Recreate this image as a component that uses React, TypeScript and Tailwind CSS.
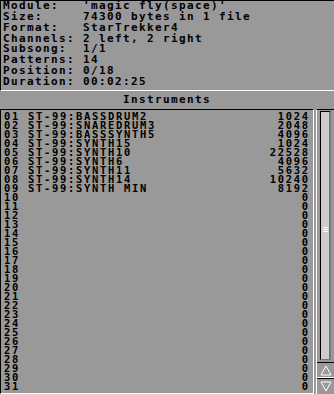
import React from "react";

const info: [string, string][] = [
  ["Module:", "'magic fly(space)'"],
  ["Size:", "74300 bytes in 1 file"],
  ["Format:", "StarTrekker4"],
  ["Channels:", "2 left, 2 right"],
  ["Subsong:", "1/1"],
  ["Patterns:", "14"],
  ["Position:", "0/18"],
  ["Duration:", "00:02:25"],
];

const named: [string, number][] = [
  ["ST-99:BASSDRUM2", 1024],
  ["ST-99:SNAREDRUM3", 2048],
  ["ST-99:BASSSYNTH5", 4096],
  ["ST-99:SYNTH15", 1024],
  ["ST-99:SYNTH10", 22528],
  ["ST-99:SYNTH6", 4096],
  ["ST-99:SYNTH11", 5632],
  ["ST-99:SYNTH14", 10240],
  ["ST-99:SYNTH MIN", 8192],
];

const instruments = Array.from({ length: 31 }, (_, i) => {
  const n = named[i];
  return {
    num: String(i + 1).padStart(2, "0"),
    name: n ? n[0] : "",
    size: n ? n[1] : 0,
  };
});

export default function App() {
  return (
    <div
      className="w-[334px] h-[394px] overflow-hidden bg-[#999999] text-black flex flex-col font-bold"
      style={{ fontFamily: '"DejaVu Sans Mono", "Liberation Mono", monospace' }}
    >
      {/* module info */}
      <div className="h-[91px] shrink-0 border-t border-l border-t-black border-l-black border-b border-b-white pl-[2px] text-[11px] leading-[10.85px] tracking-[1.38px]">
        {info.map(([k, v]) => (
          <div key={k} className="flex whitespace-pre">
            <span className="w-[80px] shrink-0">{k}</span>
            <span>{v}</span>
          </div>
        ))}
      </div>

      <div className="h-[18px] shrink-0 flex items-center justify-center text-[11px] tracking-[1.38px]">
        Instruments
      </div>

      <div className="flex flex-1 min-h-0 gap-[2px]">
        {/* list */}
        <div className="flex-1 border-t border-l border-t-black border-l-black border-r border-r-white border-b border-b-white pl-[3px] pr-[5px] pt-[2px] text-[10.5px] leading-[9px] tracking-[1.68px]">
          {instruments.map((it) => (
            <div key={it.num} className="flex h-[9px] whitespace-pre">
              <span className="w-[24px] shrink-0">{it.num}</span>
              <span className="flex-1">{it.name}</span>
              <span className="mr-[-1.68px]">{it.size}</span>
            </div>
          ))}
        </div>

        {/* scrollbar */}
        <div className="w-[18px] shrink-0 flex flex-col border-l border-l-white border-t border-t-black">
          <div className="flex-1 px-[3px] pt-[1px] pb-[2px] flex">
            <div className="flex-1 bg-[#cccccc] border-t border-l border-t-black border-l-black border-r-2 border-r-[#777777] border-b border-b-[#777777] flex items-center justify-center">
              <div className="flex flex-col gap-[1px] mt-[-12px]">
                <div className="w-[5px] h-[1px] bg-white" />
                <div className="w-[5px] h-[1px] bg-white" />
                <div className="w-[5px] h-[1px] bg-white" />
              </div>
            </div>
          </div>
          <div className="h-[16px] shrink-0 border-t border-t-black border-b border-b-white flex items-center justify-center">
            <svg width="12" height="11" viewBox="0 0 12 11">
              <path d="M6 1 L11 10 L1 10 Z" fill="none" stroke="white" strokeWidth="1" />
            </svg>
          </div>
          <div className="h-[16px] shrink-0 border-t border-t-black flex items-center justify-center">
            <svg width="12" height="11" viewBox="0 0 12 11">
              <path d="M1 1 L11 1 L6 10 Z" fill="none" stroke="white" strokeWidth="1" />
            </svg>
          </div>
        </div>
      </div>
    </div>
  );
}
